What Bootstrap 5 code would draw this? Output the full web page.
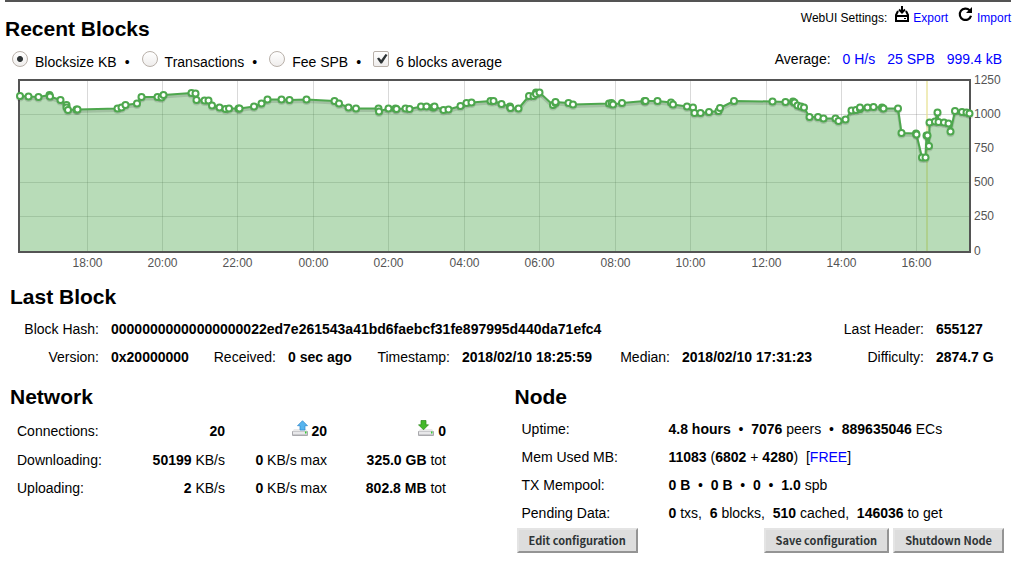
<!DOCTYPE html>
<html lang="en">
<head>
<meta charset="utf-8">
<meta name="viewport" content="width=device-width, initial-scale=1">
<title>Node status</title>
<link href="https://cdn.jsdelivr.net/npm/bootstrap@5.3.0/dist/css/bootstrap.min.css" rel="stylesheet">
<style>
body { font-family: "Liberation Sans", Arial, sans-serif; font-size: 14px; line-height: 28px; color: #000; background: #fff; }
a { color: #00f; text-decoration: none; }
h2 { font-size: 21px; line-height: 28px; font-weight: 700; margin: 0; color: #000; }
b { font-weight: 700; }
.top-bar { border-top: 2px solid #545454; margin: 0 6px 0 5px; padding-top: 13px; }
.settings { font-size: 12px; line-height: 20px; margin-top: -9px; }
.restore { margin-left: 10px; }
.controls { height: 29px; padding: 2px 15px 0 12px; }
.controls label { padding-top: 3px; margin-left: 7px; }
.dot { padding-top: 3px; margin: 0 12px 0 8px; }
.tick { appearance: none; width: 16px; height: 16px; margin: 6px 0 0; border: 1px solid #b9b1aa; background: linear-gradient(#fff, #efedec); }
.tick[type=radio] { border-radius: 50%; }
.tick[type=radio]:checked { background: radial-gradient(circle, #2e3436 2.5px, transparent 3.5px), linear-gradient(#fff, #efedec); }
.tick[type=checkbox] { border-radius: 2px; }
.tick[type=checkbox]:checked { background: url("data:image/svg+xml,%3Csvg xmlns='http://www.w3.org/2000/svg' viewBox='0 0 14 14'%3E%3Cpath d='M3 6.500l2-1 2.200 2.500L11.500 2l2 1L8 11.500H6.500z' fill='%232e3436'/%3E%3C/svg%3E") center / 14px no-repeat, linear-gradient(#fff, #efedec); }
.chart { display: block; width: 100%; height: auto; }
.chart text { font-size: 12px; fill: #545454; }
.block-grid { display: grid; grid-template-columns: 89px 77px 76px 64px 86px 131px 65px 131px 1fr 71px; column-gap: 12px; margin-top: 4px; white-space: nowrap; }
.block-grid dt { font-weight: 400; text-align: right; }
.block-grid dd { font-weight: 700; margin: 0; }
.hash { grid-column: span 7; }
.pane { padding: 0 10px; }
.pane + .pane { padding: 0 13px 0 6px; }
.stats td, .stats th { padding: 0; font-weight: 400; white-space: nowrap; }
.stats { margin: 4px 0 0 7px; }
.stats svg { vertical-align: -1px; }
.tall { height: 31px; }
.actions { margin: 1px 0 0 2px; }
.tool-btn { font: 700 11px/15px "Noto Sans CJK SC", "Noto Sans", sans-serif; height: 25px; color: #2e3436; background: #ddd; padding: 3px 10px; border: 2px solid; border-color: #e4e4e4 #949494 #949494 #e4e4e4; }
</style>
</head>
<body>
<main>
<header class="top-bar d-flex justify-content-between align-items-start">
  <h2>Recent Blocks</h2>
  <div class="settings d-flex align-items-center">
    <span class="me-2">WebUI Settings:</span>
    <a href="#" class="d-flex align-items-center"><svg class="mb-2" width="14" height="16" viewBox="0 0 14 16" aria-hidden="true"><path d="M7 0v6M4 3.500l3 3 3-3" fill="none" stroke="#000" stroke-width="2"/><path d="M3 5L1 9v6h12V9l-2-4M1 10h12" fill="none" stroke="#000" stroke-width="2"/><path d="M9 12h2v1H9z"/></svg><span class="ms-1">Export</span></a>
    <a href="#" class="restore d-flex align-items-center"><svg class="mb-2" width="15" height="15" viewBox="0 0 15 15" aria-hidden="true"><path d="M11.600 3.300A5.700 5.700 0 1 0 13 8.700" fill="none" stroke="#000" stroke-width="2.200"/><path d="M14 0v6H8z"/></svg><span class="ms-1">Import</span></a>
  </div>
</header>

<div class="controls d-flex justify-content-between">
  <form class="d-flex align-items-start">
    <span class="d-flex align-items-start"><input class="tick" type="radio" name="series" id="size" checked><label for="size">Blocksize KB</label></span><span class="dot">•</span>
    <span class="d-flex align-items-start"><input class="tick" type="radio" name="series" id="tx"><label for="tx">Transactions</label></span><span class="dot">•</span>
    <span class="d-flex align-items-start"><input class="tick" type="radio" name="series" id="fee"><label for="fee">Fee SPB</label></span><span class="dot">•</span>
    <span class="d-flex align-items-start"><input class="tick" type="checkbox" id="avg" checked><label for="avg">6 blocks average</label></span>
  </form>
  <div class="d-flex gap-2">
    <span class="me-1">Average:</span><a href="#" class="me-1">0 H/s</a><a href="#" class="me-1">25 SPB</a><a href="#">999.4 kB</a>
  </div>
</div>

<svg class="chart" viewBox="0 72 1017 211" role="img" aria-label="Block size in KB over time">
  <g id="grid" stroke="#545454" stroke-opacity=".22"></g>
  <path d="M927 80v171" stroke="#e6e08c" stroke-opacity=".6" stroke-width="2"/>
  <rect x="19" y="80" width="951" height="172" fill="none" stroke="#545454" stroke-width="2"/>
  <g id="series"></g>
  <g id="ticks"></g>
</svg>

<section class="pane">
  <h2>Last Block</h2>
  <dl class="block-grid mb-0">
    <dt>Block Hash:</dt><dd class="hash">00000000000000000022ed7e261543a41bd6faebcf31fe897995d440da71efc4</dd>
    <dt>Last Header:</dt><dd>655127</dd>
    <dt>Version:</dt><dd>0x20000000</dd>
    <dt>Received:</dt><dd>0 sec ago</dd>
    <dt>Timestamp:</dt><dd>2018/02/10 18:25:59</dd>
    <dt>Median:</dt><dd>2018/02/10 17:31:23</dd>
    <dt>Difficulty:</dt><dd>2874.7 G</dd>
  </dl>
</section>

<div class="row g-0 pt-2 mt-1">
  <section class="col-6 pane">
    <h2>Network</h2>
    <table class="stats">
      <colgroup><col style="width:108px"><col style="width:100px"><col style="width:102px"><col style="width:119px"></colgroup>
      <tr class="tall"><th scope="row">Connections:</th><td class="text-end"><b>20</b></td>
        <td class="text-end"><svg width="16" height="17" viewBox="0 0 16 17" aria-hidden="true"><path d="M2 9h12l2 3H0z" fill="#e9e9e9"/><rect y="11" width="16" height="5" rx="1" fill="#a9a9ad"/><path d="M1 11.500h14v3H1z" fill="#e8e8ea"/><path d="M13 11.500h1.500v2H13z" fill="#3c3"/><path d="M10.500.7l5 5H13V10H8V5.700H5.500z" fill="#57b4ee" stroke="#2b86cc" stroke-width=".7"/></svg> <b>20</b></td>
        <td class="text-end"><svg width="16" height="17" viewBox="0 0 16 17" aria-hidden="true"><path d="M2 9h12l2 3H0z" fill="#e9e9e9"/><rect y="11" width="16" height="5" rx="1" fill="#a9a9ad"/><path d="M1 11.500h14v3H1z" fill="#e8e8ea"/><path d="M13 11.500h1.500v2H13z" fill="#3c3"/><path d="M5.500 9.800l5-5H8V.5H3v4.300H.5z" fill="#43b82a" stroke="#2b861a" stroke-width=".7"/></svg> <b>0</b></td></tr>
      <tr><th scope="row">Downloading:</th><td class="text-end"><b>50199</b> KB/s</td><td class="text-end"><b>0</b> KB/s max</td><td class="text-end"><b>325.0 GB</b> tot</td></tr>
      <tr><th scope="row">Uploading:</th><td class="text-end"><b>2</b> KB/s</td><td class="text-end"><b>0</b> KB/s max</td><td class="text-end"><b>802.8 MB</b> tot</td></tr>
    </table>
  </section>
  <section class="col-6 pane">
    <h2>Node</h2>
    <table class="stats">
      <colgroup><col style="width:147px"><col></colgroup>
      <tr><th scope="row">Uptime:</th><td><b>4.8 hours</b> &nbsp;•&nbsp; <b>7076</b> peers &nbsp;•&nbsp; <b>889635046</b> ECs</td></tr>
      <tr><th scope="row">Mem Used MB:</th><td><b>11083</b> (<b>6802</b> + <b>4280</b>) &nbsp;[<a href="#">FREE</a>]</td></tr>
      <tr><th scope="row">TX Mempool:</th><td><b>0 B</b> &nbsp;•&nbsp; <b>0 B</b> &nbsp;•&nbsp; <b>0</b> &nbsp;•&nbsp; <b>1.0</b> spb</td></tr>
      <tr><th scope="row">Pending Data:</th><td><b>0</b> txs, &nbsp;<b>6</b> blocks, &nbsp;<b>510</b> cached, &nbsp;<b>146036</b> to get</td></tr>
    </table>
    <div class="actions d-flex gap-1">
      <button type="button" class="tool-btn me-auto">Edit configuration</button>
      <button type="button" class="tool-btn">Save configuration</button>
      <button type="button" class="tool-btn">Shutdown Node</button>
    </div>
  </section>
</div>
</main>
<script>
const points = `20,96 28.5,96.5 38.5,97 49.5,95 50,96.5 60.5,100 66.5,105 66.5,107.5 68,110 76.5,109.5 77.5,109.5 117.5,108.5 121.5,107.5 125.5,105 137,103.5 141.5,97 157.5,97 161.5,97.5 163.5,95 191.5,93 195.5,93.5 196.5,100 204.5,100.5 208.5,100.5 212,105.5 219.5,107.5 225.5,109 229,108.5 238.5,108.5 239.5,108.5 254,106.5
261.5,103.5 267.5,99.5 281.5,99.5 289.5,100 306.5,99.5 334.5,101 339,103.5 348.5,107.5 356,108.5 378.5,108.5 379,111.5 388.5,108.5 395.5,108.5 396.5,109 405.5,108.5 409.5,109 421,106.5 426.5,106.5 433,107.5 434.5,106.5 443.5,110 448.5,109.5 460.5,106 466.5,103 471.5,102.5 490.5,101 493.5,101
501.5,104 510,106.5 510.5,108 518.5,108.5 529,96 533.5,96 536,92.5 536,94 539.5,92.5 553,105 555.5,103 555.5,102 568.5,103 573,104.5 609,103.5 611.5,103 613,104.5 622,103 644.5,101 645.5,101 657.5,101 671,102.5 673,104.5 687,106.5 693,107.5 694.5,113 700.5,113 709,112 718.5,111 720,108 734,101
772.5,101.5 785.5,102 793,101.5 794.5,102.5 797.5,105.5 801,106.5 804,107.5 809.5,117 818,117 823.5,118.5 835.5,118.5 838.5,121 845.5,119.5 851.5,110.5 856,110 860,109 860,107.5 867.5,107.5 873.5,107 882,107.5 883.5,108.5 898,108.5 901.5,133 916,133.5 916.5,134.5 922,157.5 925.5,157.5 926.5,135.5 927.5,135.5 929,146 929.5,122.5 935,121.5 937.5,112.5 938.5,122 944,122.5 948.5,123.5 950.5,131.5 955,111 962,112 966.5,112.5 969.5,113.5`.trim().split(/\s+/);
const hours = { "18:00": 87.5, "20:00": 162.5, "22:00": 237.5, "00:00": 313.5, "02:00": 388.5, "04:00": 464.5, "06:00": 539.5, "08:00": 615.5, "10:00": 690.5, "12:00": 766.5, "14:00": 841.5, "16:00": 916.5 };
const sizes = [[1250, 80], [1000, 114.5], [750, 148.5], [500, 182.5], [250, 216.5], [0, 251]];
let grid = "", ticks = "";
for (const [t, x] of Object.entries(hours)) {
  grid += `<path d="M${x} 81V251"/>`;
  ticks += `<text x="${x}" y="267" text-anchor="middle">${t}</text>`;
}
for (const [v, y] of sizes) {
  if (v && v < 1250) grid += `<path d="M20 ${y}H969"/>`;
  ticks += `<text x="974" y="${Math.floor(y) + 4}">${v}</text>`;
}
document.getElementById("grid").innerHTML = grid;
document.getElementById("ticks").innerHTML = ticks;
const line = points.join(" ");
const dots = (dy, stroke, fill) => points.map(p => { const [x, y] = p.split(","); return `<circle cx="${x}" cy="${+y + dy}" r="3" fill="${fill}" stroke="${stroke}" stroke-width="2"/>`; }).join("");
document.getElementById("series").innerHTML =
  `<polygon points="20,251 ${line} 969,251" fill="#4da74d" fill-opacity=".4"/>` +
  `<g transform="translate(0 2)" fill="none" stroke="#000" stroke-opacity=".12" stroke-width="3"><polyline points="${line}"/></g>` +
  dots(1.5, "rgba(0,0,0,.12)", "none") +
  `<polyline points="${line}" fill="none" stroke="#4da74d" stroke-width="2" stroke-linejoin="round"/>` +
  dots(0, "#4da74d", "#fff");
</script>
<script src="https://cdn.jsdelivr.net/npm/bootstrap@5.3.0/dist/js/bootstrap.bundle.min.js"></script>
</body>
</html>
